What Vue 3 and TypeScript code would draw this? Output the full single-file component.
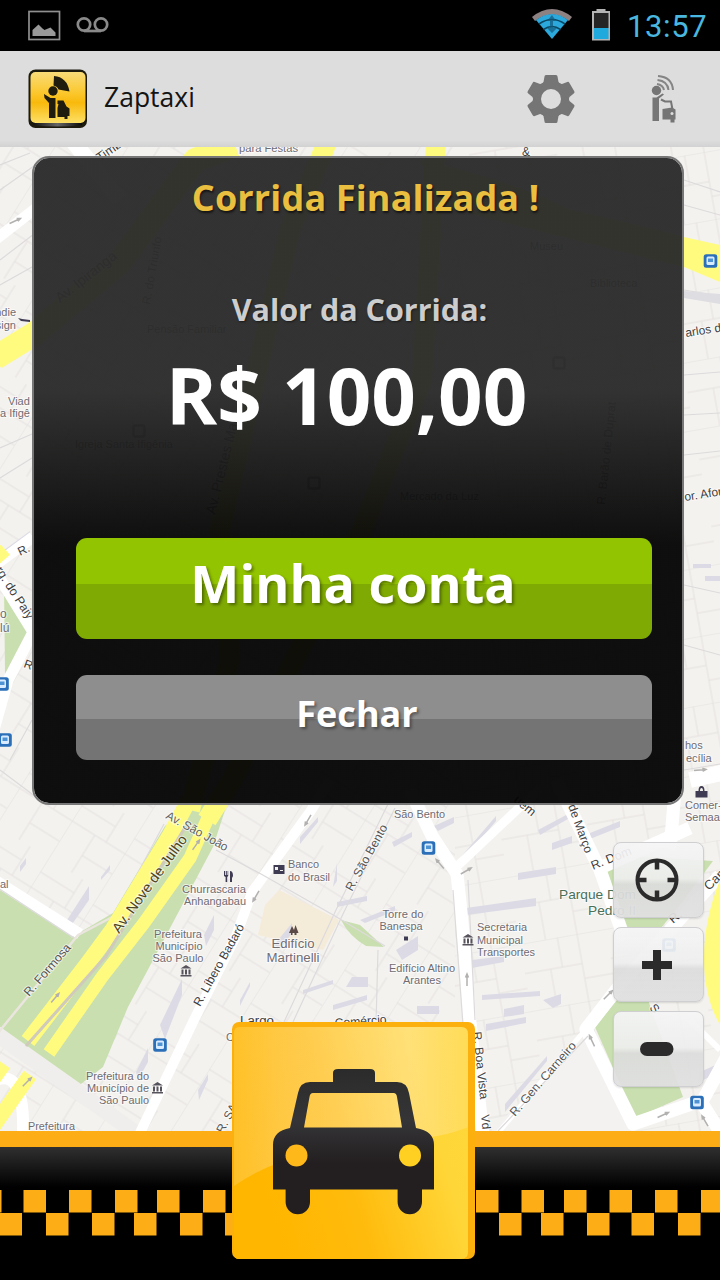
<script setup lang="ts">
interface MapLabel {
  x: number
  y: number
  t: string
  r?: number
  s?: number
  c?: string
  a?: 'start' | 'middle' | 'end'
  w?: number
}

const road = '#3f3f3f'
const place = '#6f6c72'
const dim = '#777'

const labels: MapLabel[] = [
  { x: 100, y: 162, t: 'Timb', r: -35, s: 12.5, c: road },
  { x: 239, y: 152, t: 'para Festas', s: 11, w: 59 },
  { x: 522, y: 156, t: '&', s: 12, c: road },
  { x: 16, y: 316, t: 'Indie', s: 11, a: 'end' },
  { x: 16, y: 329, t: 'Design', s: 11, a: 'end' },
  { x: 8, y: 405, t: 'Viad', s: 11 },
  { x: 0, y: 417, t: 'a Ifigê', s: 11 },
  { x: 20, y: 556, t: 'R.', r: -25, s: 12, c: road },
  { x: -5, y: 570, t: 'rg. do Paiy', r: 57, s: 12.5, c: road },
  { x: 0, y: 618, t: 'o', s: 12 },
  { x: 0, y: 632, t: 'lú', s: 12 },
  { x: 23, y: 667, t: 'R.', r: 20, s: 12, c: road },
  { x: 686, y: 337, t: 'arlos d', r: -9, s: 12, c: road },
  { x: 685, y: 501, t: 'or. Afon', r: -9, s: 12, c: road },
  { x: 685, y: 749, t: 'hos', s: 11 },
  { x: 686, y: 762, t: 'ecília', s: 11 },
  { x: 685, y: 809, t: 'Comer-', s: 11 },
  { x: 685, y: 821, t: 'Semaa', s: 11 },
  { x: 165, y: 818, t: 'Av. São João', r: 29, s: 12, w: 69, c: '#626262' },
  { x: 119, y: 934, t: 'Av. Nove de Julho', r: -54, s: 14, w: 117, c: '#4b4420' },
  { x: 29, y: 997, t: 'R. Formosa', r: -49, s: 12, w: 65, c: '#555' },
  { x: 0, y: 888, t: 'al', s: 11 },
  { x: 214, y: 893, t: 'Churrascaria', a: 'middle', s: 11, w: 64 },
  { x: 215, y: 905, t: 'Anhangabau', a: 'middle', s: 11, w: 62 },
  { x: 178, y: 938, t: 'Prefeitura', a: 'middle', s: 11, w: 48 },
  { x: 179, y: 950, t: 'Município', a: 'middle', s: 11, w: 47 },
  { x: 178, y: 962, t: 'São Paulo', a: 'middle', s: 11, w: 51 },
  { x: 149, y: 1080, t: 'Prefeitura do', a: 'end', s: 11, w: 63 },
  { x: 149, y: 1092, t: 'Município de', a: 'end', s: 11, w: 62 },
  { x: 149, y: 1104, t: 'São Paulo', a: 'end', s: 11, w: 50 },
  { x: 28, y: 1130, t: 'Prefeitura', s: 11, w: 47 },
  { x: 200, y: 1007, t: 'R. Líbero Badaró', r: -61, s: 12, w: 92, c: road },
  { x: 288, y: 868, t: 'Banco', s: 11, w: 31 },
  { x: 288, y: 880.5, t: 'do Brasil', s: 11, w: 42 },
  { x: 352, y: 892, t: 'R. São Bento', r: -61, s: 12, w: 74, c: '#555' },
  { x: 394, y: 817.5, t: 'São Bento', s: 11, w: 51 },
  { x: 293, y: 948, t: 'Edifício', a: 'middle', s: 12.5, w: 43 },
  { x: 293, y: 962, t: 'Martinelli', a: 'middle', s: 12.5, w: 53 },
  { x: 403, y: 918, t: 'Torre do', a: 'middle', s: 11, w: 41 },
  { x: 401, y: 930, t: 'Banespa', a: 'middle', s: 11, w: 43 },
  { x: 422, y: 972, t: 'Edifício Altino', a: 'middle', s: 11, w: 66 },
  { x: 422, y: 984, t: 'Arantes', a: 'middle', s: 11, w: 38 },
  { x: 240, y: 1025, t: 'Largo', s: 12, w: 34, c: road },
  { x: 226, y: 1041, t: 'C', s: 11 },
  { x: 335, y: 1027, t: 'Comércio', r: -4, s: 12, w: 52, c: road },
  { x: 223, y: 1134, t: 'R. SA', r: -62, s: 12, c: '#555' },
  { x: 477, y: 931, t: 'Secretaria', s: 11, w: 50 },
  { x: 477, y: 943.5, t: 'Municipal', s: 11, w: 46 },
  { x: 477, y: 956, t: 'Transportes', s: 11, w: 58 },
  { x: 473, y: 1032, t: 'R. Boa Vista', r: 84, s: 12, w: 68, c: '#444' },
  { x: 481, y: 1115, t: 'Vd', r: 84, s: 12, c: '#444' },
  { x: 515, y: 1117, t: 'R. Gen. Carneiro', r: -49, s: 12, w: 94, c: '#555' },
  { x: 513, y: 801, t: 'uem', r: 40, s: 12.5, c: road },
  { x: 568, y: 806, t: 'de Março', r: 70, s: 12, w: 51, c: road },
  { x: 593, y: 870, t: 'R. Dom', r: -22, s: 12.5, c: road },
  { x: 559, y: 899, t: 'Parque Dom', s: 13, w: 77, c: '#4a7058' },
  { x: 588, y: 915, t: 'Pedro II', s: 13, w: 48, c: '#4a7058' },
  { x: 709, y: 891, t: 'Can', r: -44, s: 13, c: road },
  { x: 673, y: 924, t: 'R.', r: -40, s: 13, c: road },
  { x: 649, y: 1008, t: 'S', r: 50, s: 12, c: road },
  { x: 60, y: 303, t: 'Av. Ipiranga', r: -38, s: 14, c: dim },
  { x: 215, y: 515, t: 'Av. Prestes Maia', r: -76, s: 14, c: dim },
  { x: 150, y: 305, t: 'R. do Triunfo', r: -80, s: 12, c: dim },
  { x: 605, y: 505, t: 'R. Barão de Duprat', r: -84, s: 12, c: dim },
  { x: 147, y: 333, t: 'Pensão Familiar', s: 11, c: dim },
  { x: 75, y: 448, t: 'Igreja Santa Ifigênia', s: 11, c: dim },
  { x: 400, y: 500, t: 'Mercado da Luz', s: 11, c: dim },
  { x: 590, y: 287, t: 'Biblioteca', s: 11, c: dim },
  { x: 530, y: 250, t: 'Museu', s: 11, c: dim },
]

const shadows: string[] = [
  'M67 920l22-34v14l-21 30z', 'M160 1025l22-46v16l-17 44z', 'M136 1072l12-24v14l-10 18z',
  'M204 935l10-20v15l-8 16z', 'M198 1090l10-16v6l-9 20z', 'M20 866l6-8v6l-6 8z',
  'M101 877l9-12v5l-9 10z', 'M335 875l2-12v18l-4 6z', 'M392 842l20-10v5l-18 10z',
  'M434 826l20-9v6l-16 8z', 'M337 902l30-6v5l-30 6z', 'M360 920l35-14v5l-30 12z',
  'M396 950l22-14v14l-16 10z', 'M352 977h16v10h-22z', 'M333 1005l34-10v5l-34 10z',
  'M417 1006h22v8h-22z', 'M274 945l18-22v10l-12 16z', 'M303 990l30-10v4l-30 10z',
  'M538 830l30-16v5l-28 16z', 'M552 843l20-7v7l-20 7z', 'M590 833l30-12v6l-30 12z',
  'M466 908l70-10v8l-70 9z', 'M518 873l38-6v7l-38 6z', 'M472 960l32-4v6l-32 6z',
  'M482 995l58-4v5l-58 4z', 'M504 1009l20-4v9l-20 3z', 'M486 1024l40-7v6l-40 8z',
  'M543 1000l18-6v10l-8 4z', 'M505 1104l42-48v5l-42 51z', 'M700 1072l20-9v8l-22 12z',
  'M0 553l30-22v8l-30 22z', 'M460 858l36-42v5l-36 43z', 'M300 837l18-20v5l-18 22z',
  'M240 1000l10-18v4l-10 20z', 'M705 576h15v5h-15z', 'M693 564h18v4h-18z',
]

const stations: [number, number][] = [
  [710.5, 261], [2, 684], [5, 740], [428.5, 848], [160, 1045], [697, 1102.5], [669, 945],
]
const dimStations: [number, number][] = [[559, 363], [139, 431], [314, 483]]
const halls: [number, number][] = [[186, 971], [157.5, 1088], [468, 940]]
const arrows: [number, number, number][] = [
  [196, 845, -55], [55, 998, -50], [27, 1082, -45], [308, 820, 120], [256, 896, 120],
  [440, 864, 230], [467, 980, -90], [466, 871, -30], [592, 1041, 245],
  [663, 1115, -25], [705, 1121, 240], [700, 770, -5], [15, 221, -25], [608, 995, -45],
]

const topTiles = [-21, 23.5, 69, 115, 157, 203, 476, 521.5, 564, 609.5, 655, 701]
const lowTiles = [-0.5, 46, 92, 134, 180, 225, 499, 541, 587, 631.5, 678]
const teeth = [0, 60, 120, 180, 240, 300]
</script>

<template>
  <div class="screen">
    <header class="status">
      <svg class="note-icons" width="90" height="50" viewBox="24 0 90 50">
        <rect x="29" y="11.500" width="30.500" height="28" fill="none" stroke="#8f8f8f" stroke-width="1.700" />
        <path d="M32.500 36v-6l6-5.500 4 4 2 1.500 6-2.500 5 5v3.500z" fill="#999" />
        <g fill="none" stroke="#8a8a8a" stroke-width="2.700">
          <circle cx="84" cy="24.500" r="6.200" /><circle cx="101" cy="24.500" r="6.200" />
          <path d="M84 31h17" />
        </g>
      </svg>
      <div class="status-right">
        <svg width="80" height="50" viewBox="531 0 80 50">
          <path d="M532 17q20-16 40 0l-3 4q-17-13-34 0z" fill="#8d8182" />
          <path d="M536 20q16-12 32 0L552 39z" fill="#2ba9dc" />
          <g fill="none" stroke="#0b4763" stroke-width="1.600"><path d="M539 24q13-9 26 0M543.500 29.500q8.500-6 17 0" /></g>
          <path d="M552 15l4 6h-3v7h4l-5 5-5-5h3v-7h-3z" fill="#11587c" opacity=".7" />
          <path d="M596.500 9h9v2h4.500V40.500h-18V11h4.500z" fill="#b4b4b4" />
          <path d="M594 13h14.500v15H594z" fill="#252525" />
          <path d="M594 28h14.500v11H594z" fill="#1fa9dd" />
        </svg>
        <span class="clock">13:57</span>
      </div>
    </header>

    <nav class="appbar">
      <svg class="logo" width="60" height="60" viewBox="28 69 60 60">
        <defs>
          <linearGradient id="logoFill" x1="0" y1="0" x2="0" y2="1">
            <stop offset="0" stop-color="#f9dc78" /><stop offset=".45" stop-color="#fbc526" />
            <stop offset=".6" stop-color="#f8b90c" /><stop offset="1" stop-color="#fde066" />
          </linearGradient>
          <linearGradient id="logoRim" x1="0" y1="0" x2="1" y2="0">
            <stop offset="0" stop-color="#111" /><stop offset=".5" stop-color="#666" /><stop offset="1" stop-color="#0a0a0a" />
          </linearGradient>
        </defs>
        <rect x="28.500" y="69.500" width="58.500" height="58.500" rx="7" fill="#1c190d" />
        <path d="M33 125q25 3 49 0v-2H33z" fill="url(#logoRim)" />
        <rect x="30.500" y="72" width="55" height="51" rx="5" fill="url(#logoFill)" />
        <g fill="#211d0e">
          <path d="M54 76q13 1 15.500 15.500l-11-2q-1-3-5-4z" />
          <circle cx="53" cy="91" r="4.700" />
          <path d="M44 94l6.500 4h5V118h-6.500V103l-4.500-5z" />
          <path d="M57.500 108l1-4h-1v-3.500h6l3 6 3 2v7.500h-2v3h-3v-2h-7z" />
        </g>
      </svg>
      <span class="app-name">Zaptaxi</span>
      <div class="actions">
        <svg width="50" height="50" viewBox="-25 -25 50 50">
          <g fill="#757575">
            <circle r="18" />
            <path v-for="a in teeth" :key="a" :transform="`rotate(${a})`" d="M-6.500-22.500q0-1.500 1.500-1.500H5q1.500 0 1.500 1.500L7.500-17l3 3h-21l3-3z" />
          </g>
          <circle r="10" fill="#ddd" />
        </svg>
        <svg class="hail" width="26" height="50" viewBox="651 74 26 50">
          <g fill="none" stroke="#858585" stroke-width="2">
            <path d="M658 76q14 1 15 14M657.500 80q10 1 11 10M657 84q6 1 7 6" />
          </g>
          <g fill="#757575">
            <circle cx="656.500" cy="90.500" r="4.700" />
            <path d="M652.500 97.500h4l6-4 1.500 1-5 4V121h-6.500z" />
          </g>
          <path d="M661 99.500l4 2h6l1.500 8" fill="none" stroke="#757575" stroke-width="2" />
          <path d="M662.500 109l9.500-1.500 3.500 2v10h-1v3h-4v-3h-8z" fill="#757575" />
          <circle cx="672" cy="113.500" r="1.500" fill="#ddd" />
        </svg>
      </div>
    </nav>

    <main class="stage">
      <svg class="map" width="720" height="984" viewBox="0 147 720 984">
        <defs>
          <pattern id="lotsA" width="78" height="62" patternUnits="userSpaceOnUse" patternTransform="rotate(-58)">
            <path d="M0 0H78M0 27H44M44 0V62M20 27V62M44 40H78M62 0V40" fill="none" stroke="#e4e1e0" stroke-width="1" />
          </pattern>
          <pattern id="lotsB" width="87" height="68" patternUnits="userSpaceOnUse" patternTransform="rotate(-10)">
            <path d="M0 0H87M0 30H58M58 0V68M26 30V68M58 45H87M38 0V30" fill="none" stroke="#e4e1df" stroke-width="1" />
          </pattern>
        </defs>
        <rect y="147" width="720" height="984" fill="#f4f2ef" />
        <rect y="147" width="455" height="984" fill="url(#lotsA)" />
        <rect x="455" y="147" width="265" height="984" fill="url(#lotsB)" />
        <path d="M492 1131l92-95 52 95z" fill="#f3f2f1" />
        <path d="M265 905l14-15 60 30-16 30-65-15z" fill="#f5ebd9" />
        <path v-for="d in shadows" :key="d" :d="d" fill="#dcdbe5" />

        <g fill="#c9dfb0">
          <path d="M0 890l72 47-72 93z" />
          <path d="M165 826l30-22h32l-14 43-53 100-32 60-25 60-26 20-27-18-50-40 72-92 41-24z" />
          <path d="M341 920l19 5 24 22-18-1q-17-10-25-26z" />
          <path d="M4 584l9 3 19 43-20 48-7-4z" />
          <path d="M606 868l30-12 77 5-30 40-22 27h-35z" />
          <path d="M595 1027l22-27h31l35 97-48 21z" />
        </g>

        <g fill="none" stroke="#fff" stroke-linejoin="round">
          <path d="M-5 880l85 54" stroke-width="11" />
          <path d="M-5 1033l82 58 70 50" stroke="#f0eeec" stroke-width="16" />
          <path d="M-5 1080q30-12 28 55" stroke-width="12" />
          <path d="M120 913l-42 22-80 98" stroke="#ebe5df" stroke-width="2.500" />
          <path d="M330 780l-20 32-58 80-16 44-42 84-55 115" stroke-width="10" />
          <path d="M410 790l22 46 25 38q8 70 12 140l14 120" stroke-width="13" />
          <path d="M450 873l90-85" stroke-width="9" />
          <path d="M556 780l12 24 32 66 25 70M600 868l90-40M675 790l-5 60" stroke-width="13" />
          <path d="M720 875l-100 110-34 44 47 95 70-24 30-55M700 1100l24 38" stroke-width="13" />
          <path d="M492 1140l94-111" stroke-width="5" />
          <path d="M690 780l40-9M72 140l48 60" stroke-width="16" />
          <path d="M-5 240l45-35M-5 565l38-28M-3 574L33 632 8 680l-14 50" stroke-width="11" />
          <path d="M720 1050l-30-30" stroke-width="6" />
        </g>
        <g fill="none" stroke="#dddadc" stroke-width="1.200">
          <path d="M388 804l-52 106-52 112M395 808l-52 106-50 108M216 850l45 24 74 42 50 30M-2 888l76 50M118 910l46-86M378 950l-2 74" />
          <path d="M498 1131l90-95M453 890l10 135M468 880l7 140M684 290l36 6M684 180l36 12M684 205l36 10M684 375l36-3M684 415l36-2M684 455l36-4M684 585l36 8M684 645l36 10M684 770l36-6" />
          <path d="M0 165l30-12M0 190l34-24M0 260l34-26M0 285l32-18M0 448l32-14M0 478l32-20M0 770l40 30M10 760l22-40" />
        </g>
        <path d="M684 291l36 3v10l-36-6z" fill="#dedde2" />

        <g fill="none" stroke="#fffb7f" stroke-linejoin="round">
          <path d="M189 800l-20 37-56 92-25 34-60 78" stroke-width="16" />
          <path d="M216 800l-26 58-46 65-42 54-53 76" stroke-width="13" />
          <path d="M30 1075l-40 56M4 1064l-10 14" stroke-width="15" />
          <path d="M-5 358L34 334 120 262 195 160 235 145" stroke-width="24" />
          <path d="M328 140l-38 90-70 300 10 130-40 150M436 140l-14 240-60 150-130 250-25 40" stroke-width="20" />
          <path d="M738 860q-26 50-26 98t24 75" stroke-width="16" />
          <path d="M-5 550l9 10" stroke-width="16" />
        </g>
        <path d="M420 160q90 20 150 50 70 15 114 27l36 8v37l-36-15-240-60z" fill="#fffb7f" />
        <path d="M186 826l-80 130-80 90" fill="none" stroke="#cfcabb" stroke-width="3" />

        <g v-for="([x, y, r], i) in arrows" :key="'a' + i" :transform="`translate(${x} ${y}) rotate(${r})`" fill="none" stroke="#b3b1b0" stroke-width="1.500">
          <path d="M-6 0H6M2.500-1.500L6 0 2.500 1.500" />
        </g>
        <g v-for="([x, y], i) in stations" :key="'s' + i" :transform="`translate(${x} ${y})`">
          <rect x="-6.800" y="-6.800" width="13.600" height="13.600" rx="2.500" fill="#2b6fb8" />
          <rect x="-4" y="-4.500" width="8" height="8.500" rx="1.500" fill="#d9ecff" />
          <path d="M-2.500-2.500h5v3.500h-5z" fill="#4d93d4" />
        </g>
        <rect
          v-for="([x, y], i) in dimStations"
          :key="'d' + i"
          :x="x - 5.500"
          :y="y - 5.500"
          width="11"
          height="11"
          rx="2"
          fill="none"
          stroke="#999"
          stroke-width="2.500"
        />
        <g v-for="([x, y], i) in halls" :key="'h' + i" :transform="`translate(${x} ${y})`" fill="#57535c">
          <path d="M-5.500-2.500L0-6l5.500 3.500zM-4.500-1.500h2v5h-2zM-1-1.500h2v5h-2zM2.500-1.500h2v5h-2zM-5.500 4h11v1.500h-11z" />
        </g>
        <g fill="#3f3b52">
          <path d="M224 871h1v4h.8v-4h1v4h.8v-4h.6v5l-1 1v5h-1.600v-5l-1.600-1zM230 871q3 0 3 5l-1 2v4h-2z" />
          <path d="M273.500 865h11v9h-11zM275 867v3h3v-3zM280 870v1h3v-1z" fill-rule="evenodd" />
          <path d="M289 933l3-7 2 4 1.500-5 3 8h-2v2h-2v-2h-2v2h-1.500v-2z" fill="#5b4a45" />
          <rect x="404" y="936.500" width="4" height="4" />
          <path d="M695.500 791h3q0-5 3-5t3 5h3v6.500h-12zM700 791h3q0-3-1.500-3t-1.500 3z" fill-rule="evenodd" />
          <path d="M18 318l4 1 8 1v2l-9-1z" />
        </g>
        <g class="map-text">
          <text
            v-for="(l, i) in labels"
            :key="i"
            :transform="`translate(${l.x} ${l.y}) rotate(${l.r ?? 0})`"
            :font-size="l.s"
            :fill="l.c ?? place"
            :text-anchor="l.a ?? 'start'"
            :textLength="l.w"
            lengthAdjust="spacingAndGlyphs"
          >{{ l.t }}</text>
        </g>
      </svg>

      <section class="card">
        <h1 class="title">Corrida Finalizada !</h1>
        <p class="caption">Valor da Corrida:</p>
        <p class="price">R$ 100,00</p>
        <button class="btn primary">Minha conta</button>
        <button class="btn secondary">Fechar</button>
      </section>

      <div class="controls">
        <button class="ctl">
          <svg width="44" height="44" viewBox="-22 -22 44 44" fill="none" stroke="#2b2b2b">
            <circle r="19.500" stroke-width="4" /><path d="M0-19v8.500M0 19v-8.500M-19 0h8.500M19 0h-8.500" stroke-width="4.500" />
          </svg>
        </button>
        <button class="ctl">
          <svg width="44" height="44" viewBox="-22 -22 44 44"><path d="M-4-14h8v11h11v8H4v11h-8V5h-11v-8h11z" fill="#2b2b2b" /></svg>
        </button>
        <button class="ctl">
          <svg width="44" height="44" viewBox="-22 -22 44 44"><rect x="-17" y="-7" width="33.500" height="14" rx="7" fill="#2b2b2b" /></svg>
        </button>
      </div>
    </main>

    <footer class="footer">
      <svg class="checks" width="720" height="46" viewBox="0 1190.500 720 46" fill="#fdae17">
        <rect v-for="x in topTiles" :key="'t' + x" :x="x" y="1190.500" width="22.500" height="22.500" />
        <rect v-for="x in lowTiles" :key="'l' + x" :x="x" y="1213.500" width="22.500" height="22.500" />
      </svg>
    </footer>

    <button class="taxi">
      <svg width="243" height="237" viewBox="232 1022 243 237">
        <defs>
          <linearGradient id="tile" x1="0" y1=".3" x2="1" y2="0">
            <stop offset="0" stop-color="#ffb600" /><stop offset=".35" stop-color="#ffbb0c" />
            <stop offset=".75" stop-color="#ffd638" /><stop offset="1" stop-color="#ffd83a" />
          </linearGradient>
          <linearGradient id="gloss" x1="0" y1="0" x2="1" y2="0">
            <stop offset="0" stop-color="#ffe2a0" stop-opacity=".25" /><stop offset=".2" stop-color="#ffe4b0" stop-opacity=".36" />
            <stop offset=".75" stop-color="#ffecbc" stop-opacity=".48" /><stop offset="1" stop-color="#ffe9b0" stop-opacity=".25" />
          </linearGradient>
          <linearGradient id="body" x1="0" y1="0" x2="0" y2="1">
            <stop offset="0" stop-color="#2b2b2b" /><stop offset=".35" stop-color="#353537" />
            <stop offset=".65" stop-color="#231f20" /><stop offset="1" stop-color="#231f20" />
          </linearGradient>
        </defs>
        <rect x="232" y="1022" width="243" height="237" rx="7" fill="#fcb00e" />
        <path d="M239 1027h222q7 0 7 7v218q0 7-7 7H239q-5 0-5-6V1033q0-6 5-6z" fill="url(#tile)" />
        <path d="M239 1027h222q7 0 7 7v93q-22 10-70 14-110 6-164 45V1033q0-6 5-6z" fill="url(#gloss)" />
        <path
          fill="url(#body)"
          fill-rule="evenodd"
          d="M333 1082v-9q0-4 5-4h32q5 0 5 4v9h22q10 0 12 11l7 35q18 3 18 17v44.500h-12V1202a12.200 12.200 0 0 1-24.400 0v-12.500H310V1202a12.200 12.200 0 0 1-24.400 0v-12.500H273V1145q0-14 17-17l8-35q2-11 12-11zM313 1093q-3 0-3.500 4l-5.500 30.500h98l-5-30.500q-.5-4-3.500-4z"
        />
        <circle cx="296.500" cy="1155.500" r="11" fill="#ffb819" /><circle cx="410" cy="1155.500" r="11" fill="#ffd022" />
      </svg>
    </button>
  </div>
</template>

<style>
body {
  margin: 0;
  background: #000;
}
</style>

<style scoped>
.screen {
  position: relative;
  display: flex;
  flex-direction: column;
  width: 720px;
  height: 1280px;
  overflow: hidden;
  background: #000;
  font-family: "Open Sans", "Noto Sans", sans-serif;
}
button {
  border: 0;
  padding: 0;
  margin: 0;
  font-family: inherit;
}
svg {
  display: block;
}
.status {
  display: flex;
  justify-content: space-between;
  height: 50.500px;
  padding: 0 13px 0 24px;
}
.status-right {
  display: flex;
  gap: 16px;
}
.clock {
  width: 80px;
  color: #49b7df;
  font: 400 31px/54px Roboto, sans-serif;
  letter-spacing: 0.600px;
}
.appbar {
  display: flex;
  align-items: center;
  box-sizing: border-box;
  height: 96.500px;
  padding: 0 43px 0 28px;
  background: linear-gradient(#ddd 0 93%, #d2d2d2);
}
.app-name {
  margin-left: 16px;
  padding-bottom: 4px;
  color: #141414;
  font-size: 26.500px;
  line-height: 36px;
}
.actions {
  display: flex;
  align-items: center;
  gap: 75px;
  margin-left: auto;
}
.stage {
  position: relative;
  box-sizing: border-box;
  height: 984px;
  padding: 9px 0 0 32px;
}
.map {
  position: absolute;
  inset: 0;
}
.map-text {
  font-family: "Liberation Sans", Arial, sans-serif;
  stroke: rgba(255, 255, 255, 0.600);
  stroke-width: 2px;
  paint-order: stroke;
}
.card {
  position: relative;
  display: flex;
  flex-direction: column;
  box-sizing: border-box;
  width: 652px;
  height: 649px;
  padding: 0 30px 0 42px;
  border: 2px solid #777;
  border-radius: 17px;
  background: linear-gradient(rgba(42, 42, 42, 0.955) 0 36%, rgba(2, 2, 2, 0.950) 60%);
  background-clip: padding-box;
  text-align: center;
}
.title {
  margin: 15px 0 0;
  padding-left: 3px;
  color: #eabf3f;
  font-size: 36px;
  font-weight: 700;
  line-height: 50px;
  letter-spacing: 0.150px;
  white-space: nowrap;
  text-shadow: 1px 2px 2px #161616;
}
.caption {
  margin: 63px 0 0;
  padding-right: 9px;
  color: #cdcdcd;
  font-size: 30.500px;
  font-weight: 700;
  line-height: 46px;
  text-shadow: 1px 1px 2px #1a1a1a;
}
.price {
  margin: 8px 0 0;
  padding-right: 35px;
  color: #fff;
  font-size: 78px;
  font-weight: 700;
  line-height: 110px;
  white-space: nowrap;
}
.btn {
  color: #fff;
  font-weight: 700;
  border-radius: 11px;
  text-shadow: 2px 2px 3px rgba(0, 0, 0, 0.380);
}
.primary {
  height: 101px;
  margin-top: 88px;
  padding: 0 22px 12px 0;
  font-size: 52px;
  background: linear-gradient(#93c401 0 45.500%, #7faa03 45.500%);
}
.secondary {
  height: 85px;
  margin-top: 36px;
  padding: 0 14px 9px 0;
  font-size: 36px;
  background: linear-gradient(#8e8e8e 0 52%, #747474 52%);
}
.controls {
  position: absolute;
  left: 612.500px;
  top: 695px;
  display: flex;
  flex-direction: column;
  gap: 9px;
}
.ctl {
  display: flex;
  align-items: center;
  justify-content: center;
  box-sizing: border-box;
  width: 91px;
  height: 75.500px;
  padding-right: 2px;
  border: 1px solid #cfcfd2;
  border-radius: 8px;
  background: linear-gradient(rgba(245, 245, 246, 0.930), rgba(238, 238, 238, 0.920) 48%, rgba(220, 220, 220, 0.920) 56%, rgba(224, 224, 224, 0.940));
  box-shadow: 0 1px 2px rgba(0, 0, 0, 0.120);
}
.footer {
  box-sizing: border-box;
  height: 149px;
  padding-top: 43px;
  border-top: 16.500px solid #fdae17;
  background: linear-gradient(#303030, #000 40px);
}
.taxi {
  position: absolute;
  left: 232px;
  top: 1022px;
  background: none;
}
</style>
